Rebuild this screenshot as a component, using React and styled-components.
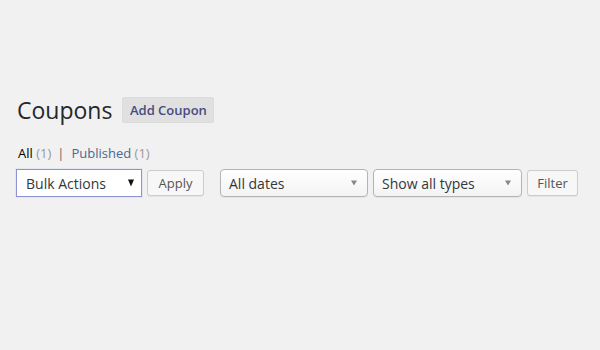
import React from "react";
import styled, { createGlobalStyle } from "styled-components";

const Global = createGlobalStyle`
  body {
    margin: 0;
    background: #f1f1f1;
    font-family: "Open Sans", "Noto Sans", sans-serif;
    color: #23282d;
  }
`;

const Page = styled.div`
  padding: 96px 0 0 16px;
  width: 600px;
  height: 350px;
  box-sizing: border-box;
`;

const TitleRow = styled.div`
  display: flex;
  align-items: center;
  height: 28px;
`;

const Heading = styled.h1`
  margin: 0 0 0 1px;
  font-size: 23px;
  font-weight: 400;
  line-height: 28px;
  color: #23282d;
`;

const AddButton = styled.a`
  margin-left: 10px;
  display: inline-flex;
  align-items: center;
  justify-content: center;
  width: 92px;
  height: 26px;
  box-sizing: border-box;
  background: #e0e0e0;
  border: 1px solid #dcdcdc;
  border-radius: 2px;
  color: #464c7e;
  font-size: 13px;
  font-weight: 600;
  text-decoration: none;
`;

const Sub = styled.ul`
  list-style: none;
  margin: 19px 0 0 2px;
  padding: 0;
  display: flex;
  font-size: 13px;
  line-height: 20px;
  color: #666;
`;

const SubItem = styled.li`
  color: ${(p) => (p.current ? "#000" : "#4a6890")};
  span {
    color: #999;
  }
`;

const Sep = styled.li`
  margin: 0 7px 0 6px;
  color: #666;
`;

const Toolbar = styled.div`
  display: flex;
  align-items: center;
  margin-top: 6px;
  height: 28px;
`;

const Select = styled.div`
  position: relative;
  display: flex;
  align-items: center;
  box-sizing: border-box;
  height: 28px;
  width: ${(p) => p.w}px;
  margin-left: ${(p) => p.ml || 0}px;
  padding-left: ${(p) => (p.focus ? 9 : 8)}px;
  font-size: 14px;
  color: #32373c;
  background: ${(p) => (p.focus ? "#fff" : "linear-gradient(#ffffff, #f3f3f3)")};
  border: 1px solid ${(p) => (p.focus ? "#8e92d6" : "#b4b4b4")};
  border-radius: ${(p) => (p.focus ? 0 : 4)}px;
  box-shadow: ${(p) => (p.focus ? "0 0 1px rgba(120,125,210,0.5)" : "0 1px 1px rgba(0,0,0,0.05)")};
`;

const Arrow = styled.span`
  position: absolute;
  right: ${(p) => (p.dark ? 7 : 10)}px;
  top: 50%;
  transform: translateY(-50%);
  width: 0;
  height: 0;
  border-left: 3.5px solid transparent;
  border-right: 3.5px solid transparent;
  border-top: ${(p) => (p.dark ? 7 : 5)}px solid ${(p) => (p.dark ? "#111" : "#888")};
`;

const Button = styled.button`
  box-sizing: border-box;
  height: 26px;
  width: ${(p) => p.w}px;
  margin-left: 5px;
  padding: 0;
  background: #f7f7f7;
  border: 1px solid #cccccc;
  border-radius: 3px;
  box-shadow: 0 1px 0 #e5e5e5;
  font-family: "Open Sans", "Noto Sans", sans-serif;
  font-size: 13px;
  color: #555;
`;

export default function App() {
  return (
    <Page>
      <Global />
      <TitleRow>
        <Heading>Coupons</Heading>
        <AddButton href="#">Add Coupon</AddButton>
      </TitleRow>
      <Sub>
        <SubItem current>
          All <span>(1)</span>
        </SubItem>
        <Sep>|</Sep>
        <SubItem>
          Published <span>(1)</span>
        </SubItem>
      </Sub>
      <Toolbar>
        <Select focus w={126}>
          Bulk Actions
          <Arrow dark />
        </Select>
        <Button w={57}>Apply</Button>
        <Select w={148} ml={16}>
          All dates
          <Arrow />
        </Select>
        <Select w={149} ml={5}>
          Show all types
          <Arrow />
        </Select>
        <Button w={51}>Filter</Button>
      </Toolbar>
    </Page>
  );
}
